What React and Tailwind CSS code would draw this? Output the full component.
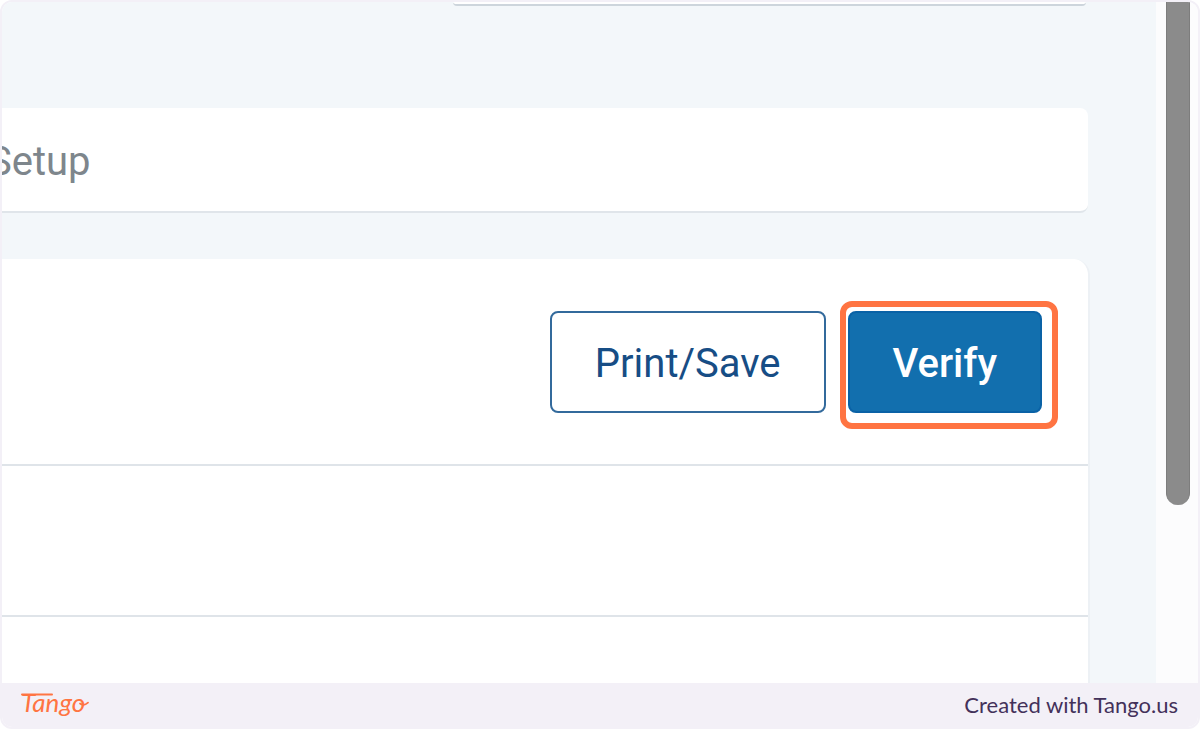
const ACTION = 'h-[102px] rounded-lg border-2 px-[43px] pt-1 text-[40px] leading-none';

function TangoLogo() {
  return (
    <a href="#tango" aria-label="Tango" className="block text-[#ff7442]">
      <svg width="76" height="40" viewBox="0 0 76 40" fill="none">
        <text x="3" y="27" fontSize="26" fontFamily="Lato, sans-serif" fontStyle="italic" fontWeight="400" fill="currentColor">
          Tango
        </text>
        <path d="M4 9.400L34 9.400" stroke="currentColor" strokeWidth="2" strokeLinecap="round" />
        <path d="M62 18.500c2.500 2 5.500 1.500 8-.8" stroke="currentColor" strokeWidth="1.800" strokeLinecap="round" />
      </svg>
    </a>
  );
}

function Footer() {
  return (
    <footer className="flex h-11 items-center justify-between bg-[#f3f0f7] pl-4 pr-5">
      <TangoLogo />
      <p className="font-[Lato,sans-serif] text-[22px] leading-none text-[#43315a]">Created with Tango.us</p>
    </footer>
  );
}

export default function App() {
  return (
    <div className="flex min-h-screen flex-col overflow-hidden rounded-xl border-2 border-[#f3f0f7] font-[Roboto,sans-serif]">
      <div className="flex flex-1">
        <main className="flex min-w-0 flex-1 flex-col bg-[#f3f7fa] pr-[68px]">
          {/* Tail end of the field above */}
          <div className="mr-0.5 h-1 w-7/12 self-end rounded-b-lg border-b-2 border-[#cdd5dc] bg-white" />

          {/* Breadcrumb */}
          <nav className="mt-[102px] flex h-[105px] items-center overflow-hidden rounded-r-lg border-b-2 border-[#e0e5ea] bg-white">
            <span className="-ml-3.5 pt-1 text-[40px] leading-none text-[#7e868c]">Setup</span>
          </nav>

          <section className="-mr-0.5 mt-[46px] flex flex-1 flex-col rounded-tr-2xl border-r-2 border-[#edf1f5] bg-white">
            <div className="flex justify-end gap-[22px] border-b-2 border-[#dfe4e9] pb-[51px] pr-[46px] pt-[52px]">
              <button type="button" className={`${ACTION} border-[#336a9c] bg-white text-[#174d85]`}>
                Print/Save
              </button>
              <div className="relative">
                <button type="button" className={`${ACTION} border-[#0a62a6] bg-[#126fae] font-medium text-white`}>
                  Verify
                </button>
                {/* Step highlight */}
                <div className="pointer-events-none absolute -bottom-4 -left-2 -right-4 -top-2.5 rounded-xl border-6 border-[#ff7442]" />
              </div>
            </div>
            <div className="h-[151px] border-b-2 border-[#dfe4e9]" />
          </section>
        </main>

        {/* Scrollbar */}
        <div className="w-[42px] bg-[#fcfcfd] px-2">
          <div className="ml-0.5 h-[503px] w-6 rounded-b-full border-x border-[#7d7d7d] bg-[#8b8b8b]" />
        </div>
      </div>
      <Footer />
    </div>
  );
}
